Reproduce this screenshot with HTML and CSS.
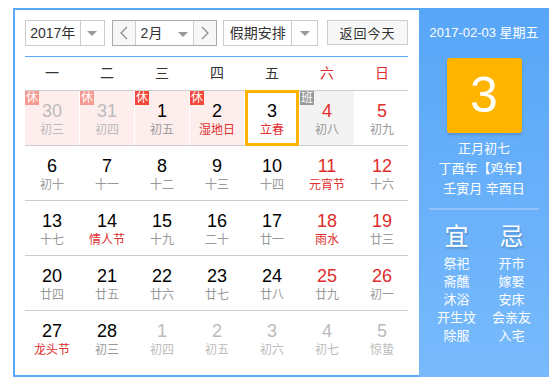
FILE: index.html
```html
<!DOCTYPE html>
<html lang="zh-CN">
<head>
    <meta charset="UTF-8">
    <title>万年历</title>
    <link rel="stylesheet" href="styles.css">
</head>
<body>

    <div class="calendar">
        <div class="main">
            <div class="toolbar">
                <div class="select year-select">
                    <span class="select-text">2017年</span>
                    <span class="select-arrow"><i class="caret"></i></span>
                </div>
                <div class="month-group">
                    <span class="nav-btn">
                        <svg width="8" height="14" viewBox="0 0 8 14"><polyline points="7,1 1,7 7,13" fill="none" stroke="#888" stroke-width="1.2"/></svg>
                    </span>
                    <span class="month-text">2月 <i class="caret"></i></span>
                    <span class="nav-btn">
                        <svg width="8" height="14" viewBox="0 0 8 14"><polyline points="1,1 7,7 1,13" fill="none" stroke="#888" stroke-width="1.2"/></svg>
                    </span>
                </div>
                <div class="select holiday-select">
                    <span class="select-text">假期安排</span>
                    <span class="select-arrow"><i class="caret"></i></span>
                </div>
                <button class="today-btn">返回今天</button>
            </div>

            <div class="week-head">
                <span>一</span><span>二</span><span>三</span><span>四</span><span>五</span>
                <span class="red">六</span><span class="red">日</span>
            </div>

            <div class="week-row">
                <div class="day other holiday"><span class="badge rest faded">休</span><div class="num">30</div><div class="lunar">初三</div></div>
                <div class="day other holiday"><span class="badge rest faded">休</span><div class="num">31</div><div class="lunar">初四</div></div>
                <div class="day holiday"><span class="badge rest">休</span><div class="num">1</div><div class="lunar">初五</div></div>
                <div class="day holiday"><span class="badge rest">休</span><div class="num">2</div><div class="lunar fest">湿地日</div></div>
                <div class="day today"><div class="num">3</div><div class="lunar fest">立春</div></div>
                <div class="day weekend work"><span class="badge shift">班</span><div class="num">4</div><div class="lunar">初八</div></div>
                <div class="day weekend"><div class="num">5</div><div class="lunar">初九</div></div>
            </div>
            <div class="week-row">
                <div class="day"><div class="num">6</div><div class="lunar">初十</div></div>
                <div class="day"><div class="num">7</div><div class="lunar">十一</div></div>
                <div class="day"><div class="num">8</div><div class="lunar">十二</div></div>
                <div class="day"><div class="num">9</div><div class="lunar">十三</div></div>
                <div class="day"><div class="num">10</div><div class="lunar">十四</div></div>
                <div class="day weekend"><div class="num">11</div><div class="lunar fest">元宵节</div></div>
                <div class="day weekend"><div class="num">12</div><div class="lunar">十六</div></div>
            </div>
            <div class="week-row">
                <div class="day"><div class="num">13</div><div class="lunar">十七</div></div>
                <div class="day"><div class="num">14</div><div class="lunar fest">情人节</div></div>
                <div class="day"><div class="num">15</div><div class="lunar">十九</div></div>
                <div class="day"><div class="num">16</div><div class="lunar">二十</div></div>
                <div class="day"><div class="num">17</div><div class="lunar">廿一</div></div>
                <div class="day weekend"><div class="num">18</div><div class="lunar fest">雨水</div></div>
                <div class="day weekend"><div class="num">19</div><div class="lunar">廿三</div></div>
            </div>
            <div class="week-row">
                <div class="day"><div class="num">20</div><div class="lunar">廿四</div></div>
                <div class="day"><div class="num">21</div><div class="lunar">廿五</div></div>
                <div class="day"><div class="num">22</div><div class="lunar">廿六</div></div>
                <div class="day"><div class="num">23</div><div class="lunar">廿七</div></div>
                <div class="day"><div class="num">24</div><div class="lunar">廿八</div></div>
                <div class="day weekend"><div class="num">25</div><div class="lunar">廿九</div></div>
                <div class="day weekend"><div class="num">26</div><div class="lunar">初一</div></div>
            </div>
            <div class="week-row">
                <div class="day"><div class="num">27</div><div class="lunar fest">龙头节</div></div>
                <div class="day"><div class="num">28</div><div class="lunar">初三</div></div>
                <div class="day other"><div class="num">1</div><div class="lunar">初四</div></div>
                <div class="day other"><div class="num">2</div><div class="lunar">初五</div></div>
                <div class="day other"><div class="num">3</div><div class="lunar">初六</div></div>
                <div class="day other"><div class="num">4</div><div class="lunar">初七</div></div>
                <div class="day other"><div class="num">5</div><div class="lunar">惊蛰</div></div>
            </div>
        </div>

        <div class="panel">
            <div class="panel-date">2017-02-03 星期五</div>
            <div class="big-day">3</div>
            <div class="panel-lunar">
                <div>正月初七</div>
                <div>丁酉年【鸡年】</div>
                <div>壬寅月 辛酉日</div>
            </div>
            <div class="panel-line"></div>
            <div class="yiji">
                <div class="yiji-col">
                    <div class="yiji-title">宜</div>
                    <div>祭祀</div>
                    <div>斋醮</div>
                    <div>沐浴</div>
                    <div>开生坟</div>
                    <div>除服</div>
                </div>
                <div class="yiji-col">
                    <div class="yiji-title">忌</div>
                    <div>开市</div>
                    <div>嫁娶</div>
                    <div>安床</div>
                    <div>会亲友</div>
                    <div>入宅</div>
                </div>
            </div>
        </div>
    </div>

</body>
</html>
```

FILE: styles.css
```css
body {
    margin: 0;
    background: #fff;
    font-family: "Liberation Sans", "Noto Sans CJK SC", sans-serif;
}
.calendar {
    display: flex;
    width: 538px;
    height: 369px;
    margin: 8px 0 0 13px;
}
.main {
    width: 406px;
    border: 2px solid #5aa8f8;
    border-right: none;
    padding: 10px 11px 10px 10px;
    box-sizing: border-box;
}

/* toolbar */
.toolbar {
    display: flex;
    height: 26px;
    font-size: 14px;
    color: #333;
}
.select {
    display: flex;
    border: 1px solid #ccc;
    box-sizing: border-box;
    height: 26px;
}
.select-text {
    line-height: 24px;
    text-align: center;
}
.select-arrow {
    display: flex;
    align-items: center;
    justify-content: center;
    border-left: 1px solid #ccc;
}
.caret {
    display: inline-block;
    width: 0;
    height: 0;
    border-left: 5px solid transparent;
    border-right: 5px solid transparent;
    border-top: 5px solid #999;
    vertical-align: middle;
}
.year-select {
    width: 80px;
}
.year-select .select-text {
    width: 55px;
}
.year-select .select-arrow {
    width: 24px;
}
.month-group {
    display: flex;
    width: 106px;
    height: 26px;
    margin-left: 7px;
    border: 1px solid #aaa;
    box-sizing: border-box;
}
.nav-btn {
    width: 22px;
    display: flex;
    align-items: center;
    justify-content: center;
    background: #f7f7f7;
}
.nav-btn:first-child {
    border-right: 1px solid #ccc;
}
.nav-btn:last-child {
    border-left: 1px solid #ccc;
}
.month-text {
    flex: 1;
    line-height: 24px;
    text-align: center;
    white-space: nowrap;
}
.month-text .caret {
    margin-left: 12px;
}
.holiday-select {
    width: 95px;
    margin-left: 6px;
}
.holiday-select .select-text {
    width: 69px;
}
.holiday-select .select-arrow {
    width: 25px;
}
.today-btn {
    width: 82px;
    height: 25px;
    margin-left: 9px;
    padding: 0;
    border: 1px solid #ccc;
    background: #f7f7f7;
    font-family: inherit;
    font-size: 13px;
    letter-spacing: 1px;
    color: #333;
}

/* grid */
.week-head {
    display: grid;
    grid-template-columns: repeat(7, 54px);
    column-gap: 1px;
    margin-top: 10px;
    border-top: 1px solid #5aa8f8;
    height: 33px;
    line-height: 33px;
    text-align: center;
    font-size: 14px;
    color: #333;
}
.week-head .red {
    color: #e02d2d;
}
.week-row {
    display: grid;
    grid-template-columns: repeat(7, 54px);
    column-gap: 1px;
    border-top: 1px solid #ccc;
}
.day {
    position: relative;
    height: 54px;
    text-align: center;
}
.num {
    padding-top: 10px;
    line-height: 20px;
    font-size: 18px;
    color: #000;
}
.lunar {
    line-height: 18px;
    font-size: 12px;
    color: #999;
}
.weekend .num {
    color: #e02d2d;
}
.lunar.fest {
    color: #e02d2d;
}
.other .num,
.other .lunar {
    color: #bbb;
}
.holiday {
    background: #fdeded;
}
.work {
    background: #f3f3f3;
}
.badge {
    position: absolute;
    top: 0;
    left: 0;
    width: 14px;
    height: 14px;
    line-height: 14px;
    font-size: 12px;
    color: #fff;
    text-align: center;
}
.badge.rest {
    background: #f2473a;
}
.badge.rest.faded {
    background: #f79b91;
}
.badge.shift {
    background: #999;
}
.today::after {
    content: "";
    position: absolute;
    top: -1px;
    left: 0;
    right: 0;
    bottom: -1px;
    border: 3px solid #ffb400;
    z-index: 1;
}

/* side panel */
.panel {
    width: 130px;
    background: linear-gradient(#58a6f8, #78bafc);
    color: #fff;
    text-align: center;
    font-size: 13px;
}
.panel-date {
    padding-top: 15px;
    line-height: 20px;
}
.big-day {
    width: 75px;
    height: 75px;
    margin: 15px auto 0;
    background: #ffb400;
    border-radius: 3px;
    box-shadow: 0 2px 3px rgba(0, 0, 0, 0.15);
    font-size: 50px;
    line-height: 75px;
}
.panel-lunar {
    margin-top: 6px;
    line-height: 20px;
}
.panel-line {
    height: 2px;
    margin: 9px 10px 0;
    background: #8ec4fb;
}
.yiji {
    display: flex;
    justify-content: center;
    margin-top: 12px;
    line-height: 18px;
}
.yiji-col {
    width: 55px;
}
.yiji-title {
    font-size: 24px;
    line-height: 30px;
    margin-bottom: 3px;
    text-shadow: 1px 2px 2px rgba(0, 0, 0, 0.2);
}
```
